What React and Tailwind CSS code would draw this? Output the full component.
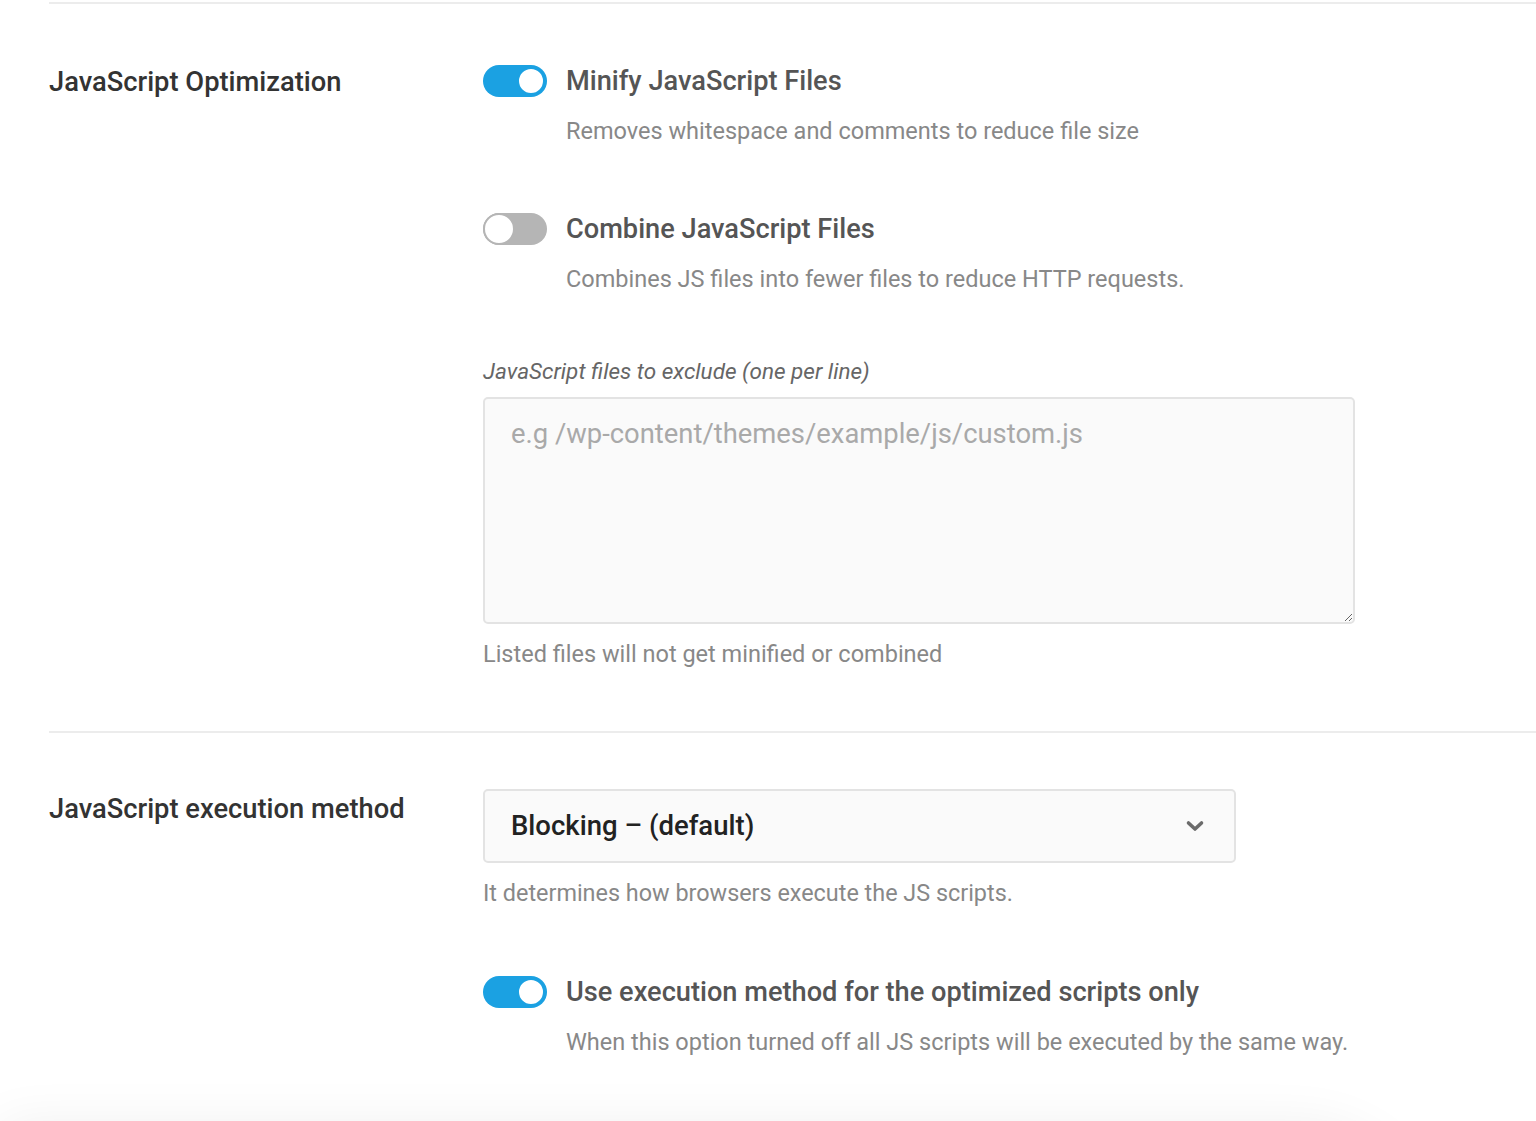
import React from "react";

function Toggle({ on }) {
  return on ? (
    <div className="relative h-[32px] w-[64px] shrink-0 rounded-full bg-[#1ba1e2]">
      <div className="absolute right-[2px] top-[2px] h-[28px] w-[28px] rounded-full border-2 border-[#1ba1e2] bg-white" />
    </div>
  ) : (
    <div className="relative h-[32px] w-[64px] shrink-0 rounded-full bg-[#b5b5b5]">
      <div className="absolute left-0 top-0 h-[32px] w-[32px] rounded-full border-2 border-[#b5b5b5] bg-white" />
    </div>
  );
}

function Option({ on, title, desc, className = "" }) {
  return (
    <div className={className}>
      <div className="flex h-[32px] items-center gap-[19px]">
        <Toggle on={on} />
        <span className="text-[27.2px] font-medium leading-[32px] text-[#555]">{title}</span>
      </div>
      <p className="ml-[83px] mt-[19px] text-[23.5px] leading-[30px] text-[#888]">{desc}</p>
    </div>
  );
}

export default function App() {
  return (
    <div
      className="relative flex h-[1121px] w-full flex-col overflow-hidden bg-white"
      style={{ fontFamily: "Roboto, 'Liberation Sans', sans-serif" }}
    >
      <div className="ml-[49px] mt-[2px] border-t-2 border-[#ececec]">
        <div className="flex pb-[62px] pt-[61px]">
          <div className="w-[434px] shrink-0 pt-[1px] text-[27.3px] font-medium leading-[32px] text-[#333]">
            JavaScript Optimization
          </div>
          <div className="flex-1">
            <Option on title="Minify JavaScript Files" desc="Removes whitespace and comments to reduce file size" />
            <Option
              className="mt-[67px]"
              on={false}
              title="Combine JavaScript Files"
              desc="Combines JS files into fewer files to reduce HTTP requests."
            />
            <p className="mt-[63px] text-[22.5px] italic leading-[28px] text-[#666]">
              JavaScript files to exclude (one per line)
            </p>
            <textarea
              className="mt-[12px] block h-[227px] w-[872px] resize-y rounded-[5px] border-2 border-[#e3e3e3] bg-[#fafafa] px-[26px] py-[17px] text-[27.4px] leading-[36px] text-[#444] outline-none placeholder:text-[#a9a9a9]"
              placeholder="e.g /wp-content/themes/example/js/custom.js"
            />
            <p className="mt-[15px] text-[23.5px] leading-[30px] text-[#888]">
              Listed files will not get minified or combined
            </p>
          </div>
        </div>
      </div>
      <div className="ml-[49px] border-t-2 border-[#ececec]">
        <div className="flex pt-[56px]">
          <div className="w-[434px] shrink-0 pt-[4px] text-[27.3px] font-medium leading-[32px] text-[#333]">
            JavaScript execution method
          </div>
          <div className="flex-1">
            <div className="flex h-[74px] w-[753px] items-center justify-between rounded-[5px] border-2 border-[#e3e3e3] bg-[#fafafa] pl-[26px] pr-[29px]">
              <span className="text-[27.5px] font-medium leading-[32px] text-[#222]">Blocking – (default)</span>
              <svg width="20" height="14" viewBox="0 0 20 14" fill="none">
                <path d="M3.5 4 L10 10 L16.5 4" stroke="#6b6b6b" strokeWidth="3.6" strokeLinecap="round" strokeLinejoin="round" />
              </svg>
            </div>
            <p className="mt-[15px] text-[23.4px] leading-[30px] text-[#888]">
              It determines how browsers execute the JS scripts.
            </p>
            <Option
              className="mt-[68px]"
              on
              title="Use execution method for the optimized scripts only"
              desc="When this option turned off all JS scripts will be executed by the same way."
            />
          </div>
        </div>
      </div>
      <div className="mt-[70px] h-[120px] w-[1420px] shrink-0 rounded-tr-[120px] bg-white shadow-[0_0_55px_rgba(0,0,0,0.07)]" />
    </div>
  );
}
